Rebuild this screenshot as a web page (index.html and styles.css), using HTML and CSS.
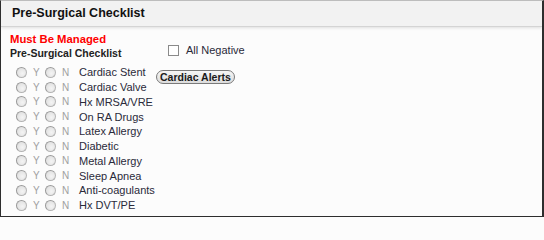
FILE: index.html
```html
<!DOCTYPE html>
<html>
<head>
<meta charset="utf-8">
<link rel="stylesheet" href="styles.css">
</head>
<body>
<div class="panel">
  <div class="header">Pre-Surgical Checklist</div>
  <div class="content">
    <div class="left">
      <div class="must">Must Be Managed</div>
      <div class="subtitle">Pre-Surgical Checklist</div>
      <div class="rows">
        <div class="row"><span class="radio"></span><span class="yn y">Y</span><span class="radio"></span><span class="yn n">N</span><span class="label">Cardiac Stent</span></div>
        <div class="row"><span class="radio"></span><span class="yn y">Y</span><span class="radio"></span><span class="yn n">N</span><span class="label">Cardiac Valve</span></div>
        <div class="row"><span class="radio"></span><span class="yn y">Y</span><span class="radio"></span><span class="yn n">N</span><span class="label">Hx MRSA/VRE</span></div>
        <div class="row"><span class="radio"></span><span class="yn y">Y</span><span class="radio"></span><span class="yn n">N</span><span class="label">On RA Drugs</span></div>
        <div class="row"><span class="radio"></span><span class="yn y">Y</span><span class="radio"></span><span class="yn n">N</span><span class="label">Latex Allergy</span></div>
        <div class="row"><span class="radio"></span><span class="yn y">Y</span><span class="radio"></span><span class="yn n">N</span><span class="label">Diabetic</span></div>
        <div class="row"><span class="radio"></span><span class="yn y">Y</span><span class="radio"></span><span class="yn n">N</span><span class="label">Metal Allergy</span></div>
        <div class="row"><span class="radio"></span><span class="yn y">Y</span><span class="radio"></span><span class="yn n">N</span><span class="label">Sleep Apnea</span></div>
        <div class="row"><span class="radio"></span><span class="yn y">Y</span><span class="radio"></span><span class="yn n">N</span><span class="label">Anti-coagulants</span></div>
        <div class="row"><span class="radio"></span><span class="yn y">Y</span><span class="radio"></span><span class="yn n">N</span><span class="label">Hx DVT/PE</span></div>
      </div>
    </div>
    <div class="right">
      <div class="check-row"><span class="checkbox"></span><span class="check-label">All Negative</span></div>
      <div class="btn">Cardiac Alerts</div>
    </div>
  </div>
</div>
</body>
</html>
```
FILE: styles.css
```css
html, body {
  margin: 0;
  padding: 0;
  background: #fcfcfc;
}
body {
  font-family: "Liberation Sans", Arial, sans-serif;
  font-size: 11px;
  color: #1e1e1e;
}
.panel {
  width: 544px;
  height: 217px;
  box-sizing: border-box;
  border: 1px solid #2e2e2e;
  border-top-color: #bdbdbd;
  border-right-width: 2px;
  background: #fcfcfc;
  overflow: hidden;
}
.header {
  height: 26px;
  box-sizing: border-box;
  padding: 5px 0 0 11px;
  background: #f2f2f2;
  font-weight: bold;
  font-size: 12.5px;
  color: #111;
  border-bottom: 1px solid #d4d4d4;
  box-shadow: 0 1px 3px rgba(0, 0, 0, 0.12);
}
.content {
  display: flex;
  padding: 5px 0 0 9px;
}
.left {
  width: 146px;
  flex: none;
}
.must {
  color: #ff0000;
  font-weight: bold;
  font-size: 11.3px;
  line-height: 14px;
}
.subtitle {
  font-weight: bold;
  font-size: 10.5px;
  color: #222;
  line-height: 14px;
  margin-bottom: 5px;
}
.rows {
  padding-left: 6px;
}
.row {
  display: flex;
  align-items: center;
  height: 14.75px;
  white-space: nowrap;
}
.radio {
  width: 11px;
  height: 11px;
  flex: none;
  box-sizing: border-box;
  border-radius: 50%;
  border: 1px solid #b4b4b4;
  border-top-color: #9a9a9a;
  border-left-color: #9a9a9a;
  background: radial-gradient(circle at 60% 60%, #f4f4f4 0%, #e2e2e2 70%);
}
.yn {
  color: #a0a0a0;
  box-sizing: border-box;
  padding-left: 6px;
  font-size: 10px;
  flex: none;
}
.yn.y {
  width: 18px;
}
.yn.n {
  width: 23px;
}
.label {
  color: #2a2a3a;
  font-size: 11px;
}
.right {
  padding-top: 12px;
}
.check-row {
  display: flex;
  align-items: center;
  margin-left: 12px;
}
.checkbox {
  width: 11px;
  height: 11px;
  box-sizing: border-box;
  border: 1px solid #8a8a8a;
  background: #fff;
}
.check-label {
  margin-left: 7px;
  color: #2a2a3a;
}
.btn {
  display: inline-block;
  margin-top: 14px;
  height: 14px;
  box-sizing: border-box;
  padding: 0 3px;
  border: 1px solid #7a7a7a;
  border-radius: 7px;
  background: linear-gradient(#f6f6f6, #dcdcdc);
  font-weight: bold;
  font-size: 10.5px;
  line-height: 12px;
  color: #1a1a1a;
}
```
